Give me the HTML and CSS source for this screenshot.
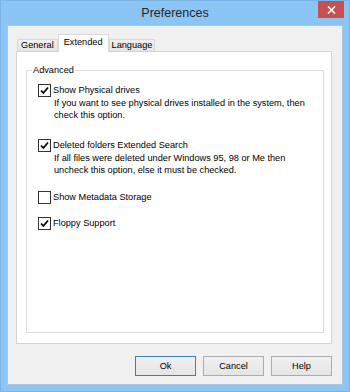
FILE: index.html
```html
<!DOCTYPE html>
<html lang="en">
<head>
    <meta charset="UTF-8">
    <title>Preferences</title>
    <link rel="stylesheet" href="styles.css">
</head>
<body>
    <div class="window">
        <div class="titlebar">
            <span class="title">Preferences</span>
            <span class="close">
                <svg width="9" height="8" viewBox="0 0 9 8"><path d="M1 0.5 L8 7.5 M8 0.5 L1 7.5" stroke="#fff" stroke-width="1.6"/></svg>
            </span>
        </div>

        <div class="client">
            <div class="tabs">
                <span class="tab">General</span>
                <span class="tab active">Extended</span>
                <span class="tab">Language</span>
            </div>

            <div class="panel">
                <fieldset class="group">
                    <legend>Advanced</legend>

                    <div class="option">
                        <span class="box checked"><svg width="11" height="11" viewBox="0 0 11 11"><path d="M2 5.5 L4.4 8 L9 2.5" fill="none" stroke="#000" stroke-width="1.8"/></svg></span>
                        <span class="label">Show Physical drives</span>
                        <p class="desc">If you want to see physical drives installed in the system, then<br>check this option.</p>
                    </div>

                    <div class="option">
                        <span class="box checked"><svg width="11" height="11" viewBox="0 0 11 11"><path d="M2 5.5 L4.4 8 L9 2.5" fill="none" stroke="#000" stroke-width="1.8"/></svg></span>
                        <span class="label">Deleted folders Extended Search</span>
                        <p class="desc">If all files were deleted under Windows 95, 98 or Me then<br>uncheck this option, else it must be checked.</p>
                    </div>

                    <div class="option">
                        <span class="box"></span>
                        <span class="label">Show Metadata Storage</span>
                    </div>

                    <div class="option">
                        <span class="box checked"><svg width="11" height="11" viewBox="0 0 11 11"><path d="M2 5.5 L4.4 8 L9 2.5" fill="none" stroke="#000" stroke-width="1.8"/></svg></span>
                        <span class="label">Floppy Support</span>
                    </div>
                </fieldset>
            </div>

            <div class="actions">
                <button class="btn btn-default">Ok</button>
                <button class="btn">Cancel</button>
                <button class="btn">Help</button>
            </div>
        </div>
    </div>
</body>
</html>
```

FILE: styles.css
```css
* {
    margin: 0;
    padding: 0;
    box-sizing: border-box;
}

body {
    font-family: "Liberation Sans", Arial, sans-serif;
    font-size: 9.2px;
    color: #000;
    background: #fff;
}

.window {
    width: 350px;
    height: 392px;
    background: #8cc4f4;
    border: 1px solid #79b3e8;
    padding: 0 6px 6px 6px;
    display: flex;
    flex-direction: column;
}

.titlebar {
    height: 24px;
    display: grid;
    grid-template-columns: 1fr auto 1fr;
    align-items: start;
}

.title {
    grid-column: 2;
    font-size: 12.5px;
    line-height: 24px;
    color: #262626;
}

.close {
    grid-column: 3;
    justify-self: end;
    width: 26px;
    height: 17px;
    margin-right: -1px;
    background: #c75050;
    display: flex;
    align-items: center;
    justify-content: center;
}

.client {
    flex: 1;
    background: #f0f0f0;
    border: 1px solid #a6c8e6;
    display: flex;
    flex-direction: column;
    padding: 8px 10px 8px 8px;
}

.tabs {
    display: flex;
    align-items: flex-end;
    padding-left: 1px;
    position: relative;
    z-index: 1;
}

.tab {
    height: 12px;
    line-height: 11px;
    padding: 0 3px;
    border: 1px solid #d9d9d9;
    border-bottom: none;
    background: linear-gradient(#f0f0f0, #e5e5e5);
    color: #000;
}

.tab + .tab {
    border-left: none;
}

.tab.active {
    height: 18px;
    line-height: 15px;
    padding: 0 5px;
    background: #fff;
    border-left: 1px solid #d9d9d9;
    margin-bottom: -1px;
}

.tab.active + .tab {
    border-left: 1px solid #d9d9d9;
    padding: 0 2px;
}

.panel {
    flex: 1;
    background: #fff;
    border: 1px solid #d2d2d2;
    padding: 12px 7px 10px 9px;
    display: flex;
}

.group {
    flex: 1;
    border: 1px solid #dcdcdc;
    padding: 7px 0 0 11px;
}

.group legend {
    margin-left: -6px;
    padding: 0 1px;
    line-height: 13px;
}

.option {
    display: grid;
    grid-template-columns: 13px 1fr;
    column-gap: 2px;
    align-items: center;
    margin-bottom: 13px;
}

.option:nth-of-type(1) {
    margin-bottom: 18px;
}

.option:nth-of-type(2) {
    margin-bottom: 15px;
}

.box {
    width: 13px;
    height: 13px;
    border: 1px solid #333;
    background: #fff;
    display: flex;
    align-items: center;
    justify-content: center;
}

.label {
    line-height: 13px;
}

.desc {
    grid-column: 2;
    margin-top: 1px;
    padding-left: 1px;
    line-height: 11.5px;
}

.actions {
    display: flex;
    justify-content: flex-end;
    gap: 7px;
    margin-top: 12px;
}

.btn {
    width: 61px;
    height: 20px;
    border: 1px solid #acacac;
    background: linear-gradient(#f0f0f0, #e5e5e5);
    font-family: inherit;
    font-size: 9.2px;
    color: #000;
}

.btn-default {
    border-color: #3c7fb1;
}
```
